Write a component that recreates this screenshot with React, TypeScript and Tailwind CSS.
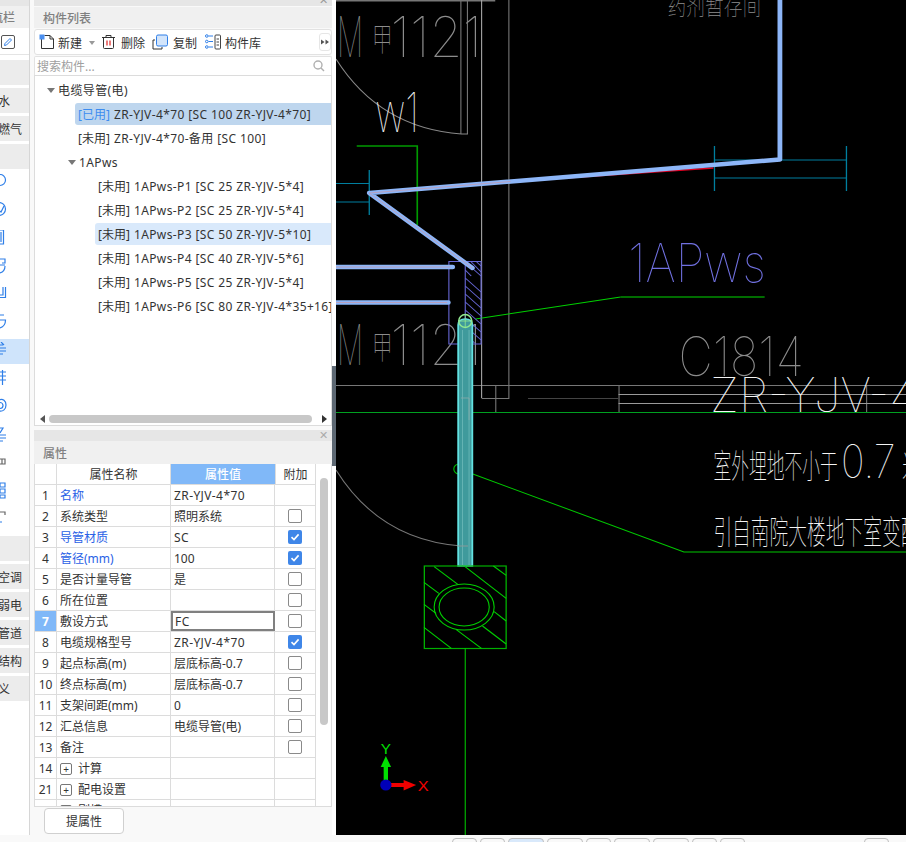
import React from "react";

const treeRows = [
  { text: "电缆导管(电)", indent: "ml-[12px]", arrow: true },
  { tag: "已用", text: "ZR-YJV-4*70 [SC 100 ZR-YJV-4*70]", indent: "ml-[40px]", active: "bg-[#bed6ee] rounded-l-[3px]" },
  { tag: "未用", text: "ZR-YJV-4*70-备用 [SC 100]", indent: "ml-[40px]" },
  { text: "1APws", indent: "ml-[33px]", arrow: true },
  { tag: "未用", text: "1APws-P1 [SC 25 ZR-YJV-5*4]", indent: "ml-[60px]" },
  { tag: "未用", text: "1APws-P2 [SC 25 ZR-YJV-5*4]", indent: "ml-[60px]" },
  { tag: "未用", text: "1APws-P3 [SC 50 ZR-YJV-5*10]", indent: "ml-[60px]", active: "bg-[#d9e9fb] rounded-l-[3px]" },
  { tag: "未用", text: "1APws-P4 [SC 40 ZR-YJV-5*6]", indent: "ml-[60px]" },
  { tag: "未用", text: "1APws-P5 [SC 25 ZR-YJV-5*4]", indent: "ml-[60px]" },
  { tag: "未用", text: "1APws-P6 [SC 80 ZR-YJV-4*35+16]", indent: "ml-[60px]" },
];

const props = [
  { no: 1, name: "名称", value: "ZR-YJV-4*70", blue: true, check: "none" },
  { no: 2, name: "系统类型", value: "照明系统", check: "off" },
  { no: 3, name: "导管材质", value: "SC", blue: true, check: "on" },
  { no: 4, name: "管径(mm)", value: "100", blue: true, check: "on" },
  { no: 5, name: "是否计量导管", value: "是", check: "off" },
  { no: 6, name: "所在位置", value: "", check: "off" },
  { no: 7, name: "敷设方式", value: "FC", check: "off", editing: true },
  { no: 8, name: "电缆规格型号", value: "ZR-YJV-4*70", check: "on" },
  { no: 9, name: "起点标高(m)", value: "层底标高-0.7", check: "off" },
  { no: 10, name: "终点标高(m)", value: "层底标高-0.7", check: "off" },
  { no: 11, name: "支架间距(mm)", value: "0", check: "off" },
  { no: 12, name: "汇总信息", value: "电缆导管(电)", check: "off" },
  { no: 13, name: "备注", value: "", check: "off" },
  { no: 14, name: "计算", value: "", check: "none", group: true },
  { no: 21, name: "配电设置", value: "", check: "none", group: true },
  { no: 25, name: "剔槽", value: "", check: "none", group: true },
];

const categoryBars = [
  { label: "通风空调", w: "pr-[7px]" },
  { label: "智控弱电", w: "pr-[7px]" },
  { label: "工业管道", w: "pr-[7px]" },
  { label: "建筑结构", w: "pr-[7px]" },
  { label: "自定义", w: "pr-[19px]" },
];

const stripIcons: React.ReactNode[] = [
  <circle cx="0" cy="6" r="5.5" />,
  <><circle cx="-1" cy="7" r="6.5" /><path d="M-2 8 L1 10 L4 4" /></>,
  <path d="M-2 0 H3.5 V14 H-2 M1 2 V12" />,
  <path d="M-1 1 H5 V5 H2 M5 8 C5 12 3 14 0 15 M-1 7 H5" />,
  <path d="M-1 11.5 H5.5 V1 M3 1 V9 H-1" />,
  <path d="M-1 1 H4 M-1 6 H5.5 C5.5 10 3 13 0 14" />,
  <path d="M-1 3 H3 M-1 6 H6 M-1 9 H6 M-1 12 H3 M1 0 L4 3" />,
  <path d="M-1 2 H6 M-1 6 H6 M-1 10 H6 M2.5 0 V15" />,
  <><path d="M-1 2 C3 0 6 3 6 7 C6 11 3 14 -1 13" /><circle cx="0" cy="7.5" r="3" /></>,
  <path d="M-1 2 H3 L0 7 M-1 9 H6 M-1 12 H6 M-1 15 H3" />,
  <path className="stroke-[#666]" d="M-1 5 H5 V10 H-1 M2 5 V10" />,
  <path d="M0 1 H5 V5 H0 Z M0 7 H5 V11 H0 Z M0 13 H5 V16 H0 Z" />,
  <><path className="stroke-[#666]" d="M-1 2 H5 V5" /><path d="M-1 12 H2" /></>,
];

const Checkbox = ({ state }: { state: string }) => {
  if (state === "none") return null;
  if (state === "on") {
    return (
      <div className="flex h-[14px] w-[14px] items-center justify-center rounded-[2px] bg-[#3f86e8]">
        <svg width="10" height="10" viewBox="0 0 10 10" fill="none" stroke="white" strokeWidth="1.6">
          <path d="M1.5 5.2 L4 7.6 L8.6 2.4" />
        </svg>
      </div>
    );
  }
  return <div className="h-[14px] w-[14px] rounded-[2px] border border-[#8a8a8a] bg-white" />;
};

const DoorLabel = ({ y }: { y: number }) => (
  <g fontWeight="100" fill="#8c8c8c">
    <text x="1" y={y} fontSize="56" textLength="24" lengthAdjust="spacingAndGlyphs">M</text>
    <text x="33" y={y - 6} fontSize="32" textLength="19" lengthAdjust="spacingAndGlyphs">甲</text>
    <text x="50" y={y} fontSize="56" textLength="84" lengthAdjust="spacingAndGlyphs">1121</text>
  </g>
);

const CadDrawing = () => {
  const hatchBox = [
    [90, 566.7, 111.7, 584.3], [118.3, 566.7, 156, 598.3], [144.3, 566, 156, 575.3],
    [80.7, 582.3, 94.3, 593.3], [80.7, 604.3, 91.7, 613.3], [145, 611.7, 156, 621],
    [80.7, 627.3, 105.7, 648.3], [110, 629.3, 133.3, 648.3], [134.3, 626, 156, 644],
  ];
  const purpleHatch = [
    [118.5, 270, 124, 276], [118.5, 278, 133, 292], [118.5, 286, 133, 300], [118.5, 294, 133, 308],
    [118.5, 302, 133, 316], [118.5, 310, 133, 324], [118.5, 318, 133, 332], [118.5, 326, 133, 340],
    [118.5, 334, 127, 343], [124, 262, 133, 272], [118.5, 262, 133, 276], [129, 262, 133, 266],
  ];
  const thin = "font-['Inter','Noto_Sans_CJK_SC',sans-serif]";
  const cjk = "font-['Noto_Sans_CJK_SC',sans-serif]";
  return (
    <svg
      className={`absolute inset-0 ${thin}`}
      width="570"
      height="835"
      viewBox="0 0 522.6 835"
      preserveAspectRatio="none"
      fill="none"
    >
      {/* wall lines */}
      <g stroke="#777" strokeWidth="1">
        <path d="M0 0.5 H146" strokeWidth="2" />
        <path d="M114.5 0 V134 M120.5 0 V134 M158.5 0 V398.5 H133.5" />
        <path d="M0 385.5 H570 M259.5 385 V412 M486.5 385 V412 M146.5 385 V412" />
        <path d="M176 398.5 H259" stroke="#444" />
      </g>
      <path d="M133.5 0 V398" stroke="#a8a8a8" />
      <path d="M259 394.5 H570 M259 403.5 H570" stroke="#9a9a9a" />
      <path d="M0 59 Q 40 128 115 134 H121" stroke="#888" />
      <path d="M0 470 Q 40 540 115 546 H121" stroke="#777" />

      {/* CAD labels */}
      <DoorLabel y={57} />
      <DoorLabel y={365} />
      <text fontWeight="100" fill="#8c8c8c" x="314" y="376" fontSize="54" textLength="115" lengthAdjust="spacingAndGlyphs">C1814</text>
      <text fontWeight="100" fill="#f0f0f0" x="36" y="132" fontSize="54" textLength="40" lengthAdjust="spacingAndGlyphs">w1</text>
      <text className={cjk} fontWeight="100" fill="#8c8c8c" x="304" y="15" fontSize="24" textLength="86" lengthAdjust="spacingAndGlyphs">药剂暂存间</text>
      <text fontWeight="100" fill="#7070e0" x="268" y="282" fontSize="53" textLength="126" lengthAdjust="spacingAndGlyphs">1APws</text>
      <text fontWeight="100" fill="#f4f4f4" x="343" y="412" fontSize="47" textLength="190" lengthAdjust="spacingAndGlyphs">ZR-YJV-4</text>
      <text className={cjk} fontWeight="100" fill="#f4f4f4" x="346" y="478" fontSize="33" textLength="114" lengthAdjust="spacingAndGlyphs">室外埋地不小于</text>
      <text fontWeight="100" fill="#f4f4f4" x="463" y="478" fontSize="46" textLength="50" lengthAdjust="spacingAndGlyphs">0.7</text>
      <text className={cjk} fontWeight="100" fill="#f4f4f4" x="519" y="478" fontSize="33" textLength="17" lengthAdjust="spacingAndGlyphs">米</text>
      <text className={cjk} fontWeight="100" fill="#f4f4f4" x="346" y="544" fontSize="33" textLength="189" lengthAdjust="spacingAndGlyphs">引自南院大楼地下室变配</text>

      {/* green lines */}
      <path d="M19 146 H74.5 V225" stroke="#009a00" strokeWidth="1.5" />
      <path d="M0 412.5 H570" stroke="#00a020" />
      <path d="M128 319 L261 297" stroke="#00d000" />
      <path d="M261 297 H393" stroke="#009000" strokeWidth="1.5" />
      <path d="M118 471 L319 552 H570" stroke="#00c800" />
      <circle cx="113" cy="469" r="5" stroke="#00c000" />

      {/* dimension ticks */}
      <path d="M347 146 V191 M468 146 V191 M347 160 H468 M347 178 H468 M30.5 170 V215 M0 183.5 H30 M0 202 H30" stroke="#007f9f" strokeWidth="1.2" />

      {/* purple box with hatch */}
      <path d="M103.5 261.5 H133 V344 H103.5 Z M118.5 261.5 V344" stroke="#6868d8" />
      {purpleHatch.map((l, i) => (
        <line key={i} x1={l[0]} y1={l[1]} x2={l[2]} y2={l[3]} stroke="#6868d8" />
      ))}

      {/* red under line */}
      <path d="M210 178 L346 168" stroke="#e00020" strokeWidth="1.4" />

      {/* cable pipe */}
      <g stroke="#8db6f8" strokeWidth="4.4" strokeLinejoin="round" strokeLinecap="round">
        <path d="M407 0 V159.5 L30.5 193 L125 268" />
        <path d="M0 267 H107 M0 302.5 H103" />
      </g>
      <path d="M30.5 193 L125 268 M30.5 193 L160 181.5 M0 267 H105 M0 302.5 H102" stroke="#c89aa8" strokeWidth="0.7" />

      {/* vertical cyan conduit */}
      <path d="M112 566 V325 Q112 319 118.5 319 Q125 319 125 325 V566 Z" fill="#3f9a9c" stroke="#63e2e2" strokeWidth="1.6" />
      <path d="M116 330 V566 M122 330 V566" stroke="#6cb8b8" strokeWidth="0.8" />
      <path d="M114.5 398 H122 V420" stroke="#8aa" strokeWidth="0.8" />
      <path d="M111 546 H121" stroke="#8a9a9a" />
      <ellipse cx="118.5" cy="321" rx="6" ry="6.5" stroke="#90e890" strokeWidth="1.4" />
      <path d="M112 321 H125 M118.5 315 V327" stroke="#90e890" strokeWidth="0.8" />

      {/* pit box */}
      <rect x="81" y="566" width="75" height="82.5" stroke="#00b000" strokeWidth="1.2" />
      {hatchBox.map((l, i) => (
        <line key={i} x1={l[0]} y1={l[1]} x2={l[2]} y2={l[3]} stroke="#00d000" />
      ))}
      <ellipse cx="117.5" cy="607" rx="27.5" ry="23" stroke="#00d000" />
      <ellipse cx="117.5" cy="607" rx="23" ry="19" stroke="#00d000" />
      <path d="M118.5 648 V835" stroke="#00c000" />

      {/* axis gizmo */}
      <path d="M45.7 785 V766" stroke="#00e000" strokeWidth="4" />
      <path d="M45.7 756 L50.5 767 H41 Z" fill="#00e000" />
      <path d="M46 785 H63" stroke="#f00000" strokeWidth="4" />
      <path d="M73.5 785 L62 780 V790.5 Z" fill="#f00000" />
      <ellipse cx="45.7" cy="785" rx="5.2" ry="5.6" fill="#0000b8" />
      <text className="font-['Liberation_Sans',sans-serif]" x="41" y="754" fontSize="14" fill="#00e000">Y</text>
      <text className="font-['Liberation_Sans',sans-serif]" x="75" y="791" fontSize="15" fill="#f00000">X</text>
    </svg>
  );
};

const LeftStrip = () => (
  <div className="flex h-[835px] w-[30px] flex-col overflow-hidden border-r border-[#d6d6d6] bg-white">
    <div className="h-[6px] shrink-0 bg-[#e6e6e6]" />
    <div className="flex h-[22px] shrink-0 items-center justify-end whitespace-nowrap bg-[#f0f0f0] pr-[14px] pt-[2px] text-[12px] font-medium text-[#808080]">
      导航栏
    </div>
    <div className="mt-[1px] flex h-[26px] shrink-0 items-center border-b border-[#e4e4e4] pl-[1px]">
      <div className="flex h-[14px] w-[14px] items-center justify-center rounded-[2px] border border-[#555]">
        <svg width="10" height="10" viewBox="0 0 10 10" fill="none" stroke="#2f7fe8" strokeWidth="1">
          <path d="M1.5 8.5 L2 6.5 L7 1.5 L8.5 3 L3.5 8 Z" />
        </svg>
      </div>
    </div>
    <div className="mt-[5px] h-[25px] shrink-0 bg-[#ececec]" />
    <div className="mt-[3px] flex h-[25px] shrink-0 items-center justify-end whitespace-nowrap bg-[#ececec] pr-[19px] pt-[2px] text-[12px] text-[#333]">
      给排水
    </div>
    <div className="mt-[3px] flex h-[25px] shrink-0 items-center justify-end whitespace-nowrap bg-[#ececec] pr-[7px] pt-[2px] text-[12px] text-[#333]">
      采暖燃气
    </div>
    <div className="mt-[3px] h-[25px] shrink-0 bg-[#ececec]" />
    {/* y = 170 from here */}
    <div className="flex shrink-0 flex-col">
      {stripIcons.map((icon, i) => (
        <div key={i} className="flex h-[28px] items-center">
          <div className={`flex h-[25px] w-full items-center ${i === 6 ? "bg-[#cfe4fb]" : ""}`}>
            <svg width="8" height="18" viewBox="0 0 8 18" fill="none" stroke="#2f7fe8" strokeWidth="1.2" className="overflow-hidden">
              {icon}
            </svg>
          </div>
        </div>
      ))}
    </div>
    <div className="mt-[3px] h-[25px] shrink-0 bg-[#ececec]" />
    {categoryBars.map((c) => (
      <div
        key={c.label}
        className={`mt-[3px] flex h-[25px] shrink-0 items-center justify-end whitespace-nowrap bg-[#ececec] pt-[2px] text-[12px] text-[#333] ${c.w}`}
      >
        {c.label}
      </div>
    ))}
  </div>
);

const ListPanel = () => (
  <div className="flex h-[426px] flex-col">
    <div className="relative h-[6px] shrink-0 bg-[#e6e6e6]">
      <span className="absolute right-[4px] top-[-6px] text-[11px] leading-[12px] text-[#999]">✕</span>
    </div>
    <div className="mt-[1px] flex h-[21px] shrink-0 items-center bg-[#f0f0f0] pl-[9px] pt-[2px] text-[12px] font-medium text-[#808080]">
      构件列表
    </div>
    <div className="mt-[1px] flex h-[26px] shrink-0 items-center rounded-[3px] border border-[#e2e2e2] bg-white text-[12px] text-[#333]">
      <svg className="ml-[4px]" width="16" height="16" viewBox="0 0 16 16" fill="none" stroke="#333">
        <path d="M2.5 4 V14.5 H14.5 V5 L11 1.5 H5.5" />
        <path d="M11 1.5 V5 H14.5" />
        <rect x="0.5" y="0.5" width="5" height="5" fill="#4a8ff0" stroke="none" />
      </svg>
      <span className="ml-[3px] pt-[3px]">新建</span>
      <span className="ml-[7px] mt-[1px] h-0 w-0 border-x-[3px] border-t-[4px] border-x-transparent border-t-[#999]" />
      <svg className="ml-[6px]" width="15" height="16" viewBox="0 0 15 16" fill="none" stroke="#333">
        <path d="M1 3.5 H14 M5 3.5 V1.5 H10 V3.5 M2.5 3.5 V13.5 Q2.5 14.5 3.5 14.5 H11.5 Q12.5 14.5 12.5 13.5 V3.5" />
        <path d="M6 6.5 V11.5 M9 6.5 V11.5" stroke="#e02020" strokeWidth="1.2" />
      </svg>
      <span className="ml-[5px] pt-[3px]">删除</span>
      <svg className="ml-[7px]" width="17" height="16" viewBox="0 0 17 16" fill="none" stroke="#333">
        <path d="M3 6 H1 V15 H10 V13" />
        <rect x="4.5" y="1" width="11" height="11" rx="1.5" fill="#d3e5fb" stroke="#2f7fe8" />
      </svg>
      <span className="ml-[4px] pt-[3px]">复制</span>
      <svg className="ml-[8px]" width="16" height="16" viewBox="0 0 16 16" fill="none" stroke="#2f7fe8">
        <circle cx="1.8" cy="2" r="1.3" />
        <circle cx="1.8" cy="7.5" r="1.3" />
        <circle cx="1.8" cy="13" r="1.3" />
        <path d="M3.5 2 H8 M3.5 7.5 H8 M3.5 13 H8" />
        <rect x="10" y="1" width="5.5" height="14" rx="1" stroke="#444" />
        <path d="M11.5 5 H14 M11.5 8 H14 M11.5 11 H14" stroke="#444" />
      </svg>
      <span className="ml-[4px] pt-[3px]">构件库</span>
      <div className="ml-auto mr-0 flex h-[18px] w-[12px] items-center justify-center rounded-[3px] border border-[#e6e6e6]">
        <svg width="8" height="6" viewBox="0 0 8 6" fill="#555">
          <path d="M0 0.5 L3.5 3 L0 5.5 Z M4.5 0.5 L8 3 L4.5 5.5 Z" />
        </svg>
      </div>
    </div>
    <div className="mt-[1px] flex h-[19px] shrink-0 items-center justify-between rounded-t-[2px] border-x border-t border-[#e2e2e2] bg-white pl-[2px] pr-[6px] text-[12px] text-[#a0a0a0]">
      <span className="pt-[2px]">搜索构件...</span>
      <svg width="12" height="12" viewBox="0 0 12 12" fill="none" stroke="#b0b0b0" strokeWidth="1.4">
        <circle cx="5" cy="5" r="4" />
        <path d="M8 8 L11 11" />
      </svg>
    </div>
    <div className="relative flex min-h-0 flex-1 flex-col overflow-hidden border border-[#dcdcdc] bg-white pt-[2px] text-[12px] text-[#333]">
      {treeRows.map((row, i) => (
        <div key={i} className="flex h-[24px] shrink-0 items-center whitespace-nowrap py-[1px]">
          <div className={`flex h-[22px] flex-1 items-center ${row.indent} ${row.active ?? ""}`}>
            {row.arrow ? (
              <span className="mr-[3px] h-0 w-0 border-x-[4px] border-t-[5px] border-x-transparent border-t-[#777]" />
            ) : (
              <span className="w-[3px]" />
            )}
            {row.tag && (
              <span className={`pt-[2px] ${i === 1 ? "mr-[4px] text-[#3c8cf0]" : "mr-[4px]"}`}>[{row.tag}]</span>
            )}
            <span className="pt-[2px] tracking-[0.38px]">{row.text}</span>
          </div>
        </div>
      ))}
      {/* horizontal scrollbar */}
      <div className="absolute bottom-[2px] left-[5px] right-[4px] flex h-[8px] items-center">
        <span className="h-0 w-0 border-y-[4px] border-r-[5px] border-y-transparent border-r-[#555]" />
        <div className="ml-[4px] mr-[10px] h-[8px] flex-1 rounded-full bg-[#c8c8c8]" />
        <span className="h-0 w-0 border-y-[4px] border-l-[5px] border-y-transparent border-l-[#333]" />
      </div>
    </div>
  </div>
);

const PropsPanel = () => (
  <div className="mt-[4px] flex h-[405px] flex-col">
    <div className="relative h-[11px] shrink-0 bg-[#e6e6e6]">
      <span className="absolute right-[4px] top-[-1px] text-[11px] leading-[12px] text-[#aaa]">✕</span>
    </div>
    <div className="flex h-[23px] shrink-0 items-center bg-[#f0f0f0] pl-[9px] pt-[2px] text-[12px] font-medium text-[#808080]">
      属性
    </div>
    <div className="relative h-[343px] shrink-0 overflow-hidden border-x border-b border-[#dcdcdc] bg-white text-[12px] text-[#333]">
      <div className="flex h-[21px] w-[281px] border-b border-[#dcdcdc]">
        <div className="w-[22px] border-r border-[#dcdcdc]" />
        <div className="flex w-[114px] items-center justify-center border-r border-[#dcdcdc] pt-[2px]">属性名称</div>
        <div className="flex w-[104px] items-center justify-center bg-[#80b8f8] pt-[2px] font-medium text-white">属性值</div>
        <div className="flex w-[41px] items-center justify-center border-x border-[#dcdcdc] pt-[2px]">附加</div>
      </div>
      {props.map((p) => (
        <div key={p.no} className="flex h-[21px] w-[281px] border-b border-[#dcdcdc]">
          <div
            className={`flex w-[22px] items-center justify-center border-r border-[#dcdcdc] pt-[2px] ${
              p.editing ? "bg-[#80b8f8] font-bold text-white" : ""
            }`}
          >
            {p.no}
          </div>
          <div
            className={`flex w-[114px] items-center border-r border-[#dcdcdc] pl-[3px] pt-[2px] ${
              p.blue ? "text-[#2a62e6]" : ""
            }`}
          >
            {p.group && (
              <span className="mr-[6px] flex h-[12px] w-[12px] items-center justify-center rounded-[2px] border border-[#777] text-[10px] leading-none">
                +
              </span>
            )}
            {p.name}
          </div>
          <div
            className={`flex w-[104px] items-center pt-[2px] ${
              p.editing ? "border-2 border-[#808080] pl-[2px] pt-0" : "border-r border-[#dcdcdc] pl-[3px]"
            } ${/^[A-Z]/.test(p.value) ? "tracking-[0.4px]" : ""}`}
          >
            {p.value}
          </div>
          <div className="flex w-[41px] items-center justify-center border-r border-[#dcdcdc]">
            <Checkbox state={p.check} />
          </div>
        </div>
      ))}
      {/* vertical scrollbar */}
      <div className="absolute right-[3px] top-[14px] h-[247px] w-[8px] rounded-full bg-[#c8c8c8]" />
    </div>
    <div className="flex flex-1 items-start pl-[10px] pt-[1px]">
      <button className="h-[26px] w-[80px] rounded-[4px] border border-[#d0d0d0] bg-white pt-[2px] text-[12px] text-[#333]">
        提属性
      </button>
    </div>
  </div>
);

const tabs = [
  "w-[25px]", "w-[25px]", "w-[36px] border-[#6aa5ee] bg-[#d9e9fb]", "w-[36px]", "w-[25px]",
  "w-[36px]", "w-[36px]", "w-[25px]", "w-[25px]",
];

export default function App() {
  return (
    <div className="flex h-[842px] w-[906px] flex-col overflow-hidden bg-[#f9f9f9] font-['Noto_Sans','Noto_Sans_CJK_SC',sans-serif]">
      <div className="flex h-[835px] shrink-0">
        <LeftStrip />
        <div className="ml-[4px] flex w-[298px] flex-col">
          <ListPanel />
          <PropsPanel />
        </div>
        <div className="flex w-[4px] items-start bg-white pt-[366px]">
          <div className="h-[100px] w-[4px] bg-[#5d6873]" />
        </div>
        <div className="relative h-[835px] w-[570px] overflow-hidden bg-black">
          <CadDrawing />
        </div>
      </div>
      <div className="flex flex-1 items-start pl-[452px] pt-[3px]">
        <div className="flex gap-[3px]">
          {tabs.map((t, i) => (
            <div key={i} className={`h-[8px] rounded-t-[4px] border border-[#bdbdbd] ${t}`} />
          ))}
        </div>
        <div className="ml-[119px] h-[8px] w-[25px] rounded-t-[4px] border border-[#bdbdbd]" />
      </div>
    </div>
  );
}
